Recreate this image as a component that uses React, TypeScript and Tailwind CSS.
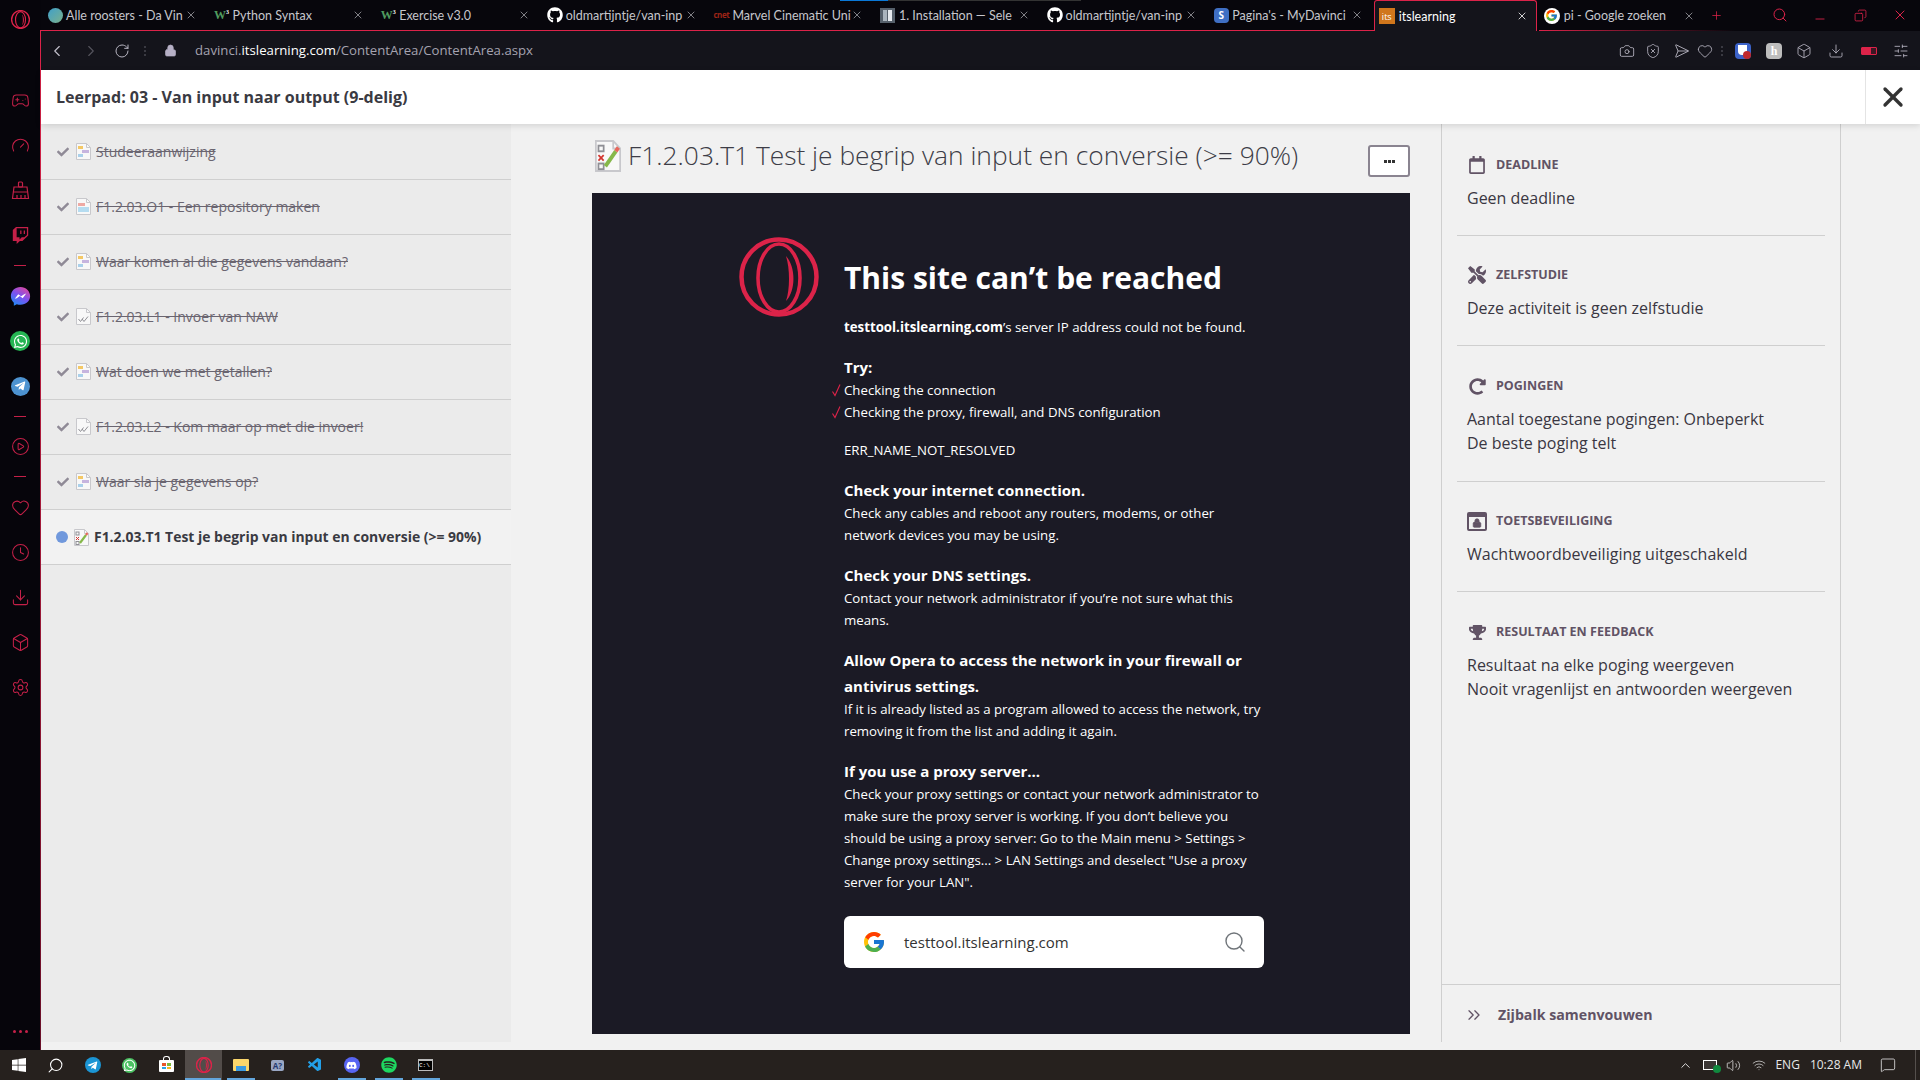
import type { ReactNode } from "react"
import {
  Box,
  Camera,
  ChevronLeft,
  ChevronRight,
  ChevronUp,
  ChevronsRight,
  CirclePlay,
  Clock,
  Copy,
  Download,
  Gamepad2,
  Gauge,
  Heart,
  Lock,
  MessageSquare,
  Minus,
  Plus,
  RotateCw,
  Search,
  Send,
  Settings,
  ShieldX,
  SlidersHorizontal,
  Volume2,
  Wifi,
  X,
} from "lucide-react"
import { FaCheck, FaDiscord, FaGithub, FaRedoAlt, FaRegCalendar, FaSpotify, FaTelegramPlane, FaTools, FaTrophy, FaTwitch, FaWhatsapp, FaWindows } from "react-icons/fa"
import { FcGoogle } from "react-icons/fc"
import { VscVscode } from "react-icons/vsc"

const RED = "#dc2349"

function OperaLogo({ size, stroke = 5 }: { size: number; stroke?: number }) {
  return (
    <svg width={size} height={size} viewBox="0 0 80 80" fill="none" stroke={RED}>
      <ellipse cx="40" cy="40" rx="37.500" ry="37.500" strokeWidth={stroke} />
      <ellipse cx="40" cy="41" rx="21" ry="34" strokeWidth={stroke * 0.8} />
      <path d="M47 19 C57 30 57 54 47 64 C51 52 51 32 47 19Z" fill={RED} stroke="none" />
    </svg>
  )
}

function Messenger() {
  return (
    <svg width="21" height="21" viewBox="0 0 24 24">
      <defs>
        <linearGradient id="msg" x1="0.8" y1="0" x2="0.2" y2="1">
          <stop offset="0" stopColor="#e0479e" />
          <stop offset="0.5" stopColor="#7a52f0" />
          <stop offset="1" stopColor="#1e8cf5" />
        </linearGradient>
      </defs>
      <path d="M12 1C5.8 1 1 5.5 1 11.4c0 3.1 1.3 5.8 3.4 7.6v3.7l3.4-1.9c1.3.4 2.7.6 4.2.6 6.2 0 11-4.5 11-10S18.200 1 12 1z" fill="url(#msg)" />
      <path d="M5.500 14.500l3.900-5.200 3.300 2.500 3.500-2.500 2.300-.6-4 5.300-3.300-2.500-3.500 2.500z" fill="#fff" />
    </svg>
  )
}

function BrushIcon() {
  return (
    <svg width="19" height="19" viewBox="0 0 19 19" fill="none" stroke="#c42048" strokeWidth="1.200">
      <rect x="7.500" y="1" width="4" height="5" rx="1" />
      <path d="M3 6h13l1.500 11.500H1.500zM2.500 11h14M6 14v3.500M10 14v3.500M14 14v3.500" />
    </svg>
  )
}

function RoundIcon({ bg, size, children }: { bg: string; size: number; children: ReactNode }) {
  return (
    <span className="flex items-center justify-center rounded-full text-white" style={{ background: bg, width: size, height: size }}>
      {children}
    </span>
  )
}

function SidebarSep() {
  return (
    <div className="flex h-[15.5px] items-center justify-center">
      <div className="h-px w-3 bg-[#c42048]" />
    </div>
  )
}

function Sidebar() {
  const icon = "h-[19px] w-[19px] text-[#c42048]"
  const Cell = ({ children }: { children: ReactNode }) => <div className="flex h-[45px] items-center justify-center">{children}</div>
  return (
    <aside className="relative flex w-[41px] shrink-0 flex-col bg-[#06050b] pr-px">
      <div className="flex h-[78px] justify-center pt-[10px]">
        <OperaLogo size={19} stroke={6} />
      </div>
      <Cell><Gamepad2 className={icon} strokeWidth={1.3} /></Cell>
      <Cell><Gauge className={icon} strokeWidth={1.3} /></Cell>
      <Cell><BrushIcon /></Cell>
      <Cell><FaTwitch size={17} className="text-[#c42048]" /></Cell>
      <SidebarSep />
      <Cell><Messenger /></Cell>
      <Cell><RoundIcon bg="#25b553" size={20}><FaWhatsapp size={15} /></RoundIcon></Cell>
      <Cell><RoundIcon bg="#4d93d1" size={19}><FaTelegramPlane size={12} /></RoundIcon></Cell>
      <SidebarSep />
      <Cell><CirclePlay className={icon} strokeWidth={1.3} /></Cell>
      <SidebarSep />
      <Cell><Heart className={icon} strokeWidth={1.3} /></Cell>
      <Cell><Clock className={icon} strokeWidth={1.3} /></Cell>
      <Cell><Download className={icon} strokeWidth={1.3} /></Cell>
      <Cell><Box className={icon} strokeWidth={1.3} /></Cell>
      <Cell><Settings className={icon} strokeWidth={1.3} /></Cell>
      <div className="mt-auto mb-[17px] flex justify-center gap-[3px]">
        <span className="h-[3px] w-[3px] rounded-full bg-[#c42048]" />
        <span className="h-[3px] w-[3px] rounded-full bg-[#c42048]" />
        <span className="h-[3px] w-[3px] rounded-full bg-[#c42048]" />
      </div>
      <div className="absolute top-[30px] right-0 bottom-0 w-px bg-gradient-to-b from-[#dc2349] to-[#6a1029]" />
    </aside>
  )
}

const W3 = (
  <span className="flex font-['Liberation_Serif',serif] text-[12px] leading-none font-bold text-[#4f9a5f]">
    W<span className="text-[6px] leading-none text-white">3</span>
  </span>
)
const Gh = <FaGithub size={16} className="text-white" />

const tabs: { icon: ReactNode; label: string }[] = [
  { icon: <span className="h-[15px] w-[15px] rounded-full bg-gradient-to-br from-[#3d9fc9] to-[#79b08a]" />, label: "Alle roosters - Da Vin" },
  { icon: W3, label: "Python Syntax" },
  { icon: W3, label: "Exercise v3.0" },
  { icon: Gh, label: "oldmartijntje/van-inp" },
  { icon: <span className="text-[8px] leading-none font-bold tracking-tighter text-[#9c2417]">cnet</span>, label: "Marvel Cinematic Uni" },
  {
    icon: (
      <span className="flex h-[15px] w-[15px] justify-center gap-px bg-[#56606b] p-[2px]">
        <span className="w-[4px] bg-[#aab4bd]" />
        <span className="w-[4px] bg-[#e6eaee]" />
      </span>
    ),
    label: "1. Installation — Sele",
  },
  { icon: Gh, label: "oldmartijntje/van-inp" },
  { icon: <span className="flex h-[15px] w-[15px] items-center justify-center rounded-sm bg-[#3f6fc4] text-[10px] leading-none font-bold text-white">S</span>, label: "Pagina's - MyDavinci" },
]

const tabText = "font-['Lato',sans-serif] text-[12.5px] whitespace-nowrap"

function Tab({ icon, label }: { icon: ReactNode; label: string }) {
  return (
    <div className="flex h-[31px] w-[166.6px] shrink-0 items-center border-b border-[#dc2349] pl-[6px]">
      <span className="flex h-[16px] w-[16px] shrink-0 items-center justify-center">{icon}</span>
      <span className={`ml-[3px] w-[112px] pt-[2px] ${tabText} text-[#c6c6cc]`}>{label}</span>
      <X className="ml-[7px] h-[12px] w-[12px] text-[#b5b5ba]" strokeWidth={1.4} />
    </div>
  )
}

function TabBar() {
  return (
    <div className="relative flex h-[31px] shrink-0 bg-[#07060c]">
      {tabs.map((t, i) => (
        <Tab key={i} icon={t.icon} label={t.label} />
      ))}
      <div className="flex h-[31px] w-[163px] shrink-0 items-center rounded-t-[3px] border-x border-t border-[#dc2349] bg-[#14141b] pl-[4px]">
        <span className="flex h-[16px] w-[16px] items-center justify-center bg-[#d0761c] text-[9px] leading-none text-white">its</span>
        <span className={`ml-[4px] w-[110px] pt-[2px] ${tabText} text-white`}>itslearning</span>
        <X className="ml-[7px] h-[12px] w-[12px] text-white" strokeWidth={1.6} />
      </div>
      <div className="relative ml-[2px] flex h-[31px] w-[166px] shrink-0 items-center pl-[5px]">
        <span className="flex h-[16px] w-[16px] items-center justify-center rounded-full bg-white"><FcGoogle size={13} /></span>
        <span className={`ml-[4px] w-[112px] pt-[2px] ${tabText} text-[#c6c6cc]`}>pi - Google zoeken</span>
        <X className="ml-[7px] h-[12px] w-[12px] text-[#b5b5ba]" strokeWidth={1.4} />
        <div className="absolute right-[-30px] bottom-0 left-0 h-px bg-gradient-to-r from-[#dc2349] to-transparent" />
      </div>
      <Plus className="ml-[5px] mt-[9px] h-[13px] w-[13px] text-[#dc2349]" strokeWidth={1.4} />
      <div className="ml-auto flex h-[30px] items-center text-[#dc2349]">
        <span className="flex w-[40px] justify-center"><Search className="h-[16px] w-[16px]" strokeWidth={1.5} /></span>
        <span className="flex w-[40px] justify-center"><Minus className="mt-[8px] h-[14px] w-[14px]" strokeWidth={1.5} /></span>
        <span className="flex w-[40px] justify-center"><Copy className="h-[13px] w-[13px] -scale-x-100" strokeWidth={1.5} /></span>
        <span className="flex w-[40px] justify-center"><X className="h-[16px] w-[16px]" strokeWidth={1.5} /></span>
      </div>
      <div className="absolute top-0 left-[799px] h-px w-[48px] bg-[#0a78d7]" />
      <div className="absolute top-0 left-[847px] h-px w-[193px] bg-[#333]" />
    </div>
  )
}

function VDots() {
  return (
    <span className="flex flex-col gap-[2px]">
      <span className="h-[2px] w-[2px] bg-[#3a3a42]" />
      <span className="h-[2px] w-[2px] bg-[#3a3a42]" />
      <span className="h-[2px] w-[2px] bg-[#3a3a42]" />
    </span>
  )
}

function AddressBar() {
  const icon = "h-[16px] w-[16px] text-[#b6b4c0]"
  return (
    <div className="flex h-[39px] shrink-0 items-center bg-[#14141b]">
      <span className="flex w-[32px] justify-center"><ChevronLeft className="h-[18px] w-[18px] text-[#c2c0cc]" strokeWidth={1.5} /></span>
      <span className="ml-[2px] flex w-[32px] justify-center"><ChevronRight className="h-[18px] w-[18px] text-[#55545e]" strokeWidth={1.5} /></span>
      <span className="flex w-[30px] justify-center"><RotateCw className={icon} strokeWidth={1.5} /></span>
      <span className="flex w-[16px] justify-center"><VDots /></span>
      <span className="flex w-[34px] justify-center"><Lock className="h-[13px] w-[13px] fill-[#b6b0c6] text-[#b6b0c6]" strokeWidth={1.5} /></span>
      <span className="ml-[8px] pt-px font-['Open_Sans',sans-serif] text-[13.2px] text-[#a5a3b0]">
        davinci.<span className="text-white">itslearning.com</span>/ContentArea/ContentArea.aspx
      </span>
      <div className="ml-auto flex items-center pr-[4px]">
        <span className="flex w-[26px] justify-center"><Camera className={icon} strokeWidth={1.3} /></span>
        <span className="flex w-[26px] justify-center"><ShieldX className={icon} strokeWidth={1.3} /></span>
        <span className="flex w-[26px] justify-center"><Send className={`${icon} rotate-45`} strokeWidth={1.3} /></span>
        <span className="flex w-[26px] justify-center"><Heart className={icon} strokeWidth={1.3} /></span>
        <span className="flex w-[8px] justify-center"><VDots /></span>
        <span className="flex w-[34px] justify-center">
          <span className="relative block h-[16px] w-[16px] rounded-sm bg-[#3b62c8]">
            <span className="absolute top-[2px] left-[3px] h-[10px] w-[9px] rounded-b-[4px] bg-white" />
            <span className="absolute right-0 bottom-0 h-[8px] w-[8px] rounded-sm bg-[#c0282d]" />
          </span>
        </span>
        <span className="flex w-[28px] justify-center">
          <span className="flex h-[16px] w-[16px] items-center justify-center rounded-sm bg-[#bdbdbd] font-['Liberation_Serif',serif] text-[12px] leading-none font-bold text-white">h</span>
        </span>
        <span className="flex w-[32px] justify-center"><Box className={icon} strokeWidth={1.3} /></span>
        <span className="flex w-[32px] justify-center"><Download className={icon} strokeWidth={1.3} /></span>
        <span className="flex w-[34px] justify-center">
          <span className="flex h-[8px] w-[16px] items-center rounded-[1px] border border-[#dc2349] bg-[#dc2349]/20">
            <span className="h-full w-[9px] bg-[#dc2349]" />
          </span>
        </span>
        <span className="flex w-[30px] justify-center"><SlidersHorizontal className={icon} strokeWidth={1.3} /></span>
      </div>
    </div>
  )
}

function DocIcon({ kind, className }: { kind: "page" | "red" | "check" | "test"; className?: string }) {
  return (
    <svg className={className} width="15" height="17" viewBox="0 0 15 17" fill="none" preserveAspectRatio="none">
      <path d="M.5.5h10l4 4v12H.5z" fill="#f8f8f8" stroke="#c8c8cc" />
      <path d="M10.500.5v4h4" stroke="#c8c8cc" />
      {kind === "page" && (
        <>
          <rect x="2" y="3" width="5" height="3" fill="#f3c866" />
          <rect x="6" y="7" width="7" height="3" fill="#c6b4de" />
          <rect x="2" y="11" width="5" height="3" fill="#a9d0ea" />
        </>
      )}
      {kind === "red" && (
        <>
          <rect x="2" y="5" width="7" height="3" fill="#eea9a3" />
          <rect x="2" y="9" width="11" height="5" fill="#b5dcf0" />
        </>
      )}
      {kind === "check" && <path d="M2.500 11l2 2.500 3-4M6 11l2 2.500 4-5" stroke="#8f8f95" strokeWidth="1" />}
      {kind === "test" && (
        <>
          <rect x="2" y="3" width="3" height="3" fill="none" stroke="#8f8f95" />
          <path d="M2 8l3 3M5 8l-3 3" stroke="#d2352f" />
          <rect x="2" y="12.500" width="3" height="3" fill="none" stroke="#8f8f95" />
          <path d="M6 14l6-8" stroke="#86b84a" strokeWidth="2.200" />
          <path d="M12 6l1.500-2" stroke="#e8675c" strokeWidth="2.200" />
        </>
      )}
    </svg>
  )
}

const items: { label: string; kind: "page" | "red" | "check" }[] = [
  { label: "Studeeraanwijzing", kind: "page" },
  { label: "F1.2.03.O1 - Een repository maken", kind: "red" },
  { label: "Waar komen al die gegevens vandaan?", kind: "page" },
  { label: "F1.2.03.L1 - Invoer van NAW", kind: "check" },
  { label: "Wat doen we met getallen?", kind: "page" },
  { label: "F1.2.03.L2 - Kom maar op met die invoer!", kind: "check" },
  { label: "Waar sla je gegevens op?", kind: "page" },
]

function PathList() {
  return (
    <div className="h-[918px] w-[470px] shrink-0 bg-[#ebebeb] pt-px">
      {items.map((item) => (
        <div key={item.label} className="flex h-[55px] items-center border-b border-[#cfcfcf] pb-px pl-[16px]">
          <FaCheck size={12} className="text-[#8f8a96]" />
          <DocIcon kind={item.kind} className="ml-[7px]" />
          <span className="ml-[5px] text-[14px] text-[#6a6570] line-through">{item.label}</span>
        </div>
      ))}
      <div className="flex h-[55px] items-center border-b border-[#cfcfcf] bg-[#f2f2f2] pl-[15px]">
        <span className="h-[12px] w-[12px] rounded-full bg-[#7098dc]" />
        <DocIcon kind="test" className="ml-[6px]" />
        <span className="ml-[5px] text-[13.95px] font-bold text-[#3a3a42]">F1.2.03.T1 Test je begrip van input en conversie (&gt;= 90%)</span>
      </div>
    </div>
  )
}

function ErrHeading({ children }: { children: ReactNode }) {
  return <h2 className="mt-[17px] mb-[-1.5px] text-[15px] leading-[25.5px] font-bold text-white">{children}</h2>
}

function RedTick() {
  return (
    <svg className="absolute top-[5px] left-[-12px]" width="9" height="13" viewBox="0 0 9 13" fill="none" stroke="#dc2349" strokeWidth="1.100">
      <path d="M.5 7.500l2.500 4L8 .5" />
    </svg>
  )
}

function ErrorPage() {
  return (
    <div className="h-[841px] w-[818px] bg-[#1b1a25] pt-[44px] pl-[252px] font-['Open_Sans',sans-serif] text-[13.25px] leading-[22px] text-white">
      <div className="ml-[-105px] flex h-[79px] items-start">
        <OperaLogo size={80} stroke={4.5} />
        <h1 className="mt-[21px] ml-[25px] text-[30px] leading-[40px] font-bold">This site can’t be reached</h1>
      </div>
      <p>
        <b>testtool.itslearning.com</b>’s server IP address could not be found.
      </p>
      <p className="mt-[18px] text-[15px] font-bold">Try:</p>
      <ul className="mt-px">
        <li className="relative">
          <RedTick />Checking the connection
        </li>
        <li className="relative">
          <RedTick />Checking the proxy, firewall, and DNS configuration
        </li>
      </ul>
      <p className="mt-[16px]">ERR_NAME_NOT_RESOLVED</p>
      <div className="w-[420px]">
        <ErrHeading>Check your internet connection.</ErrHeading>
        <p>Check any cables and reboot any routers, modems, or other network devices you may be using.</p>
        <ErrHeading>Check your DNS settings.</ErrHeading>
        <p>Contact your network administrator if you’re not sure what this means.</p>
        <ErrHeading>Allow Opera to access the network in your firewall or antivirus settings.</ErrHeading>
        <p>If it is already listed as a program allowed to access the network, try removing it from the list and adding it again.</p>
        <ErrHeading>If you use a proxy server...</ErrHeading>
        <p>Check your proxy settings or contact your network administrator to make sure the proxy server is working. If you don’t believe you should be using a proxy server: Go to the Main menu &gt; Settings &gt; Change proxy settings... &gt; LAN Settings and deselect "Use a proxy server for your LAN".</p>
      </div>
      <div className="mt-[23.5px] flex h-[52px] w-[420px] items-center rounded-[6px] bg-white pr-[17px] pl-[18px]">
        <FcGoogle size={24} />
        <span className="ml-[18px] text-[15px] text-[#333]">testtool.itslearning.com</span>
        <Search className="ml-auto h-[24px] w-[24px] text-[#70757a]" strokeWidth={1.4} />
      </div>
    </div>
  )
}

function MainColumn() {
  return (
    <div className="w-[930px] shrink-0 pl-[81px]">
      <div className="flex h-[69px] w-[818px] items-start justify-between">
        <div className="mt-[15px] flex h-[33px] items-center pl-[3px]">
          <DocIcon kind="test" className="h-[32px] w-[26px]" />
          <span className="ml-[7px] text-[26.35px] font-light whitespace-nowrap text-[#3d3d47]">F1.2.03.T1 Test je begrip van input en conversie (&gt;= 90%)</span>
        </div>
        <button className="mt-[21px] flex h-[32px] w-[42px] items-center justify-center gap-px rounded-[3px] border-2 border-[#8a8490] bg-white">
          <span className="h-[3px] w-[3px] bg-[#333]" />
          <span className="h-[3px] w-[3px] bg-[#333]" />
          <span className="h-[3px] w-[3px] bg-[#333]" />
        </button>
      </div>
      <ErrorPage />
    </div>
  )
}

function InfoSection({ icon, title, lines, className }: { icon: ReactNode; title: string; lines: string[]; className: string }) {
  return (
    <section className={`mx-[15px] px-[10px] ${className}`}>
      <div className="flex h-[24px] items-center text-[#615365]">
        <span className="flex w-[20px] justify-center">{icon}</span>
        <span className="ml-[9px] text-[12.5px] font-bold uppercase">{title}</span>
      </div>
      <div className="mt-[9px] text-[16px] leading-[24px] text-[#3a3742]">
        {lines.map((l) => (
          <p key={l} className="whitespace-nowrap">{l}</p>
        ))}
      </div>
    </section>
  )
}

function InfoPanel() {
  return (
    <div className="flex h-[918px] w-[400px] shrink-0 flex-col border-x border-[#cfcfcf]">
      <InfoSection className="border-b border-[#cfcfcf] pt-[29px] pb-[25px]" icon={<FaRegCalendar size={18} />} title="Deadline" lines={["Geen deadline"]} />
      <InfoSection className="border-b border-[#cfcfcf] pt-[27px] pb-[25px]" icon={<FaTools size={18} />} title="Zelfstudie" lines={["Deze activiteit is geen zelfstudie"]} />
      <InfoSection className="border-b border-[#cfcfcf] pt-[28px] pb-[26px]" icon={<FaRedoAlt size={17} />} title="Pogingen" lines={["Aantal toegestane pogingen: Onbeperkt", "De beste poging telt"]} />
      <InfoSection
        className="border-b border-[#cfcfcf] pt-[27px] pb-[25px]"
        icon={
          <span className="relative block h-[19px] w-[20px] rounded-[2px] border-2 border-t-[5px] border-[#615365]">
            <Lock className="absolute top-[1px] left-[3px] h-[10px] w-[10px] fill-[#615365]" strokeWidth={2} />
          </span>
        }
        title="Toetsbeveiliging"
        lines={["Wachtwoordbeveiliging uitgeschakeld"]}
      />
      <InfoSection
        className="pt-[28px]"
        icon={<FaTrophy size={17} />}
        title="Resultaat en feedback"
        lines={["Resultaat na elke poging weergeven", "Nooit vragenlijst en antwoorden weergeven"]}
      />
      <div className="mt-auto flex h-[58px] items-center border-t border-[#cfcfcf] pt-[2px] pl-[22px] text-[#615365]">
        <ChevronsRight className="h-[20px] w-[20px]" strokeWidth={1.6} />
        <span className="ml-[14px] text-[14.2px] font-bold">Zijbalk samenvouwen</span>
      </div>
    </div>
  )
}

function TaskCell({ children, active, running }: { children: ReactNode; active?: boolean; running?: boolean }) {
  return (
    <div className={`relative flex h-[30px] w-[37px] items-center justify-center ${active ? "bg-[#524c49]" : ""}`}>
      {children}
      {active && <span className="absolute right-[1px] bottom-0 left-0 h-[2px] bg-[#63a6dc]" />}
      {running && <span className="absolute right-[4px] bottom-0 left-[5px] h-[2px] bg-[#63a6dc]" />}
    </div>
  )
}

function Taskbar() {
  return (
    <footer className="flex h-[30px] shrink-0 items-center bg-[#26211e] font-['Open_Sans',sans-serif] text-[#e8e8e8]">
      <TaskCell><FaWindows size={16} className="text-white" /></TaskCell>
      <TaskCell><Search className="h-[17px] w-[17px] -scale-x-100 text-white" strokeWidth={1.5} /></TaskCell>
      <TaskCell><RoundIcon bg="#1b95d4" size={16}><FaTelegramPlane size={11} /></RoundIcon></TaskCell>
      <TaskCell><RoundIcon bg="#4cc263" size={15}><FaWhatsapp size={13} /></RoundIcon></TaskCell>
      <TaskCell>
        <span className="relative mt-[2px] grid h-[12px] w-[15px] grid-cols-2 gap-px rounded-[1px] bg-white p-[3px]">
          <span className="bg-[#e8552b]" />
          <span className="bg-[#7db93c]" />
          <span className="bg-[#2aa3e8]" />
          <span className="bg-[#f5b922]" />
          <span className="absolute top-[-4px] left-[4px] h-[4px] w-[7px] rounded-t-[3px] border border-b-0 border-white" />
        </span>
      </TaskCell>
      <TaskCell active><OperaLogo size={16} stroke={7} /></TaskCell>
      <TaskCell running>
        <span className="relative block h-[12px] w-[16px] rounded-[1px] bg-[#fbd66b]">
          <span className="absolute bottom-0 left-[3px] h-[5px] w-[10px] bg-[#3b9ae0]" />
        </span>
      </TaskCell>
      <TaskCell>
        <span className="rounded-[2px] bg-[#9aa7c4] px-[2px] text-[8px] leading-[11px] font-bold text-[#273a72]">A?</span>
      </TaskCell>
      <TaskCell><VscVscode size={16} className="text-[#23a0e8]" /></TaskCell>
      <TaskCell running><RoundIcon bg="#5865f2" size={16}><FaDiscord size={11} /></RoundIcon></TaskCell>
      <TaskCell running><FaSpotify size={16} className="text-[#1ed760]" /></TaskCell>
      <TaskCell running>
        <span className="flex h-[12px] w-[15px] items-center border border-[#bbb] border-t-[2px] bg-black font-['Liberation_Mono',monospace] text-[6px] leading-none text-white">C:\</span>
      </TaskCell>
      <div className="ml-auto flex items-center">
        <ChevronUp className="h-[15px] w-[15px]" strokeWidth={1.5} />
        <span className="relative ml-[10px] block h-[10px] w-[14px] border border-white bg-white/10">
          <span className="absolute top-[4px] left-[9px] h-[8px] w-[8px] rounded-full bg-[#10893e]" />
        </span>
        <Volume2 className="ml-[9px] h-[15px] w-[15px]" strokeWidth={1.2} />
        <Wifi className="ml-[11px] h-[14px] w-[14px]" strokeWidth={1.2} />
        <span className="ml-[9px] text-[12px]">ENG</span>
        <span className="ml-[10px] text-[12px]">10:28 AM</span>
        <MessageSquare className="ml-[18px] h-[16px] w-[16px]" strokeWidth={1.2} />
        <span className="ml-[19px] h-[30px] w-px bg-[#55504d]" />
        <span className="w-[4px]" />
      </div>
    </footer>
  )
}

export default function App() {
  return (
    <div className="flex h-[1080px] w-[1920px] flex-col overflow-hidden bg-[#f1f1f1] font-['Open_Sans',sans-serif]">
      <div className="flex min-h-0 flex-1">
        <Sidebar />
        <div className="flex min-w-0 flex-1 flex-col">
          <TabBar />
          <AddressBar />
          <header className="relative z-10 flex h-[54px] shrink-0 items-center bg-white pl-[15px] shadow-[0_2px_6px_rgba(0,0,0,0.12)]">
            <span className="text-[16px] font-bold text-[#3a3a42]">Leerpad: 03 - Van input naar output (9-delig)</span>
            <div className="ml-auto flex h-full w-[55px] items-center justify-center border-l border-[#e4e4e4]">
              <X className="h-[32px] w-[32px] text-[#333]" strokeWidth={2.5} />
            </div>
          </header>
          <div className="flex min-h-0 flex-1">
            <PathList />
            <MainColumn />
            <InfoPanel />
          </div>
        </div>
      </div>
      <Taskbar />
    </div>
  )
}
